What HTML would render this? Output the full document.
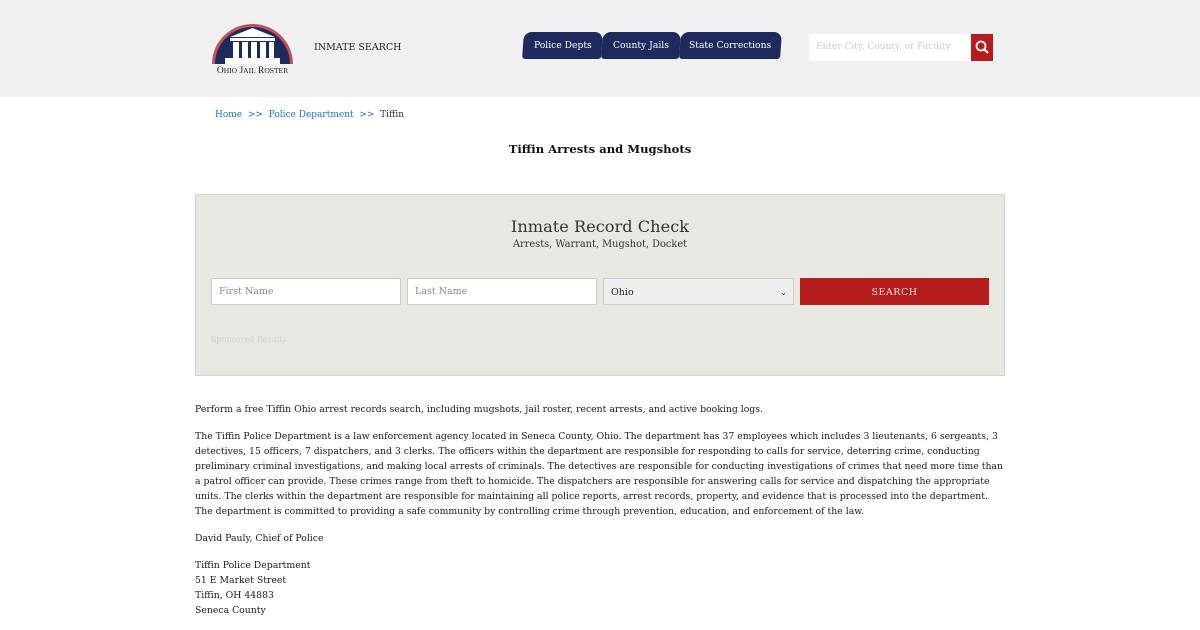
<!DOCTYPE html>
<html><head><meta charset="utf-8"><style>
*{box-sizing:border-box;margin:0;padding:0}
body{width:1200px;height:620px;overflow:hidden;background:#fff;font-family:"DejaVu Serif","Liberation Serif",serif;color:#1a1a1a}
.hdr{height:97px;background:#f0f0f0;position:relative}
.logo{position:absolute;left:206px;top:20px}
.ins{position:absolute;left:314px;top:42px;font-size:9.5px;color:#222}
.tab{position:absolute;top:32px;height:27px;background:#1f2a5c;color:#fff;font-size:9.2px;line-height:28px;text-align:center;border-radius:8px 8px 3px 3px;transform:skewX(-4deg)}
.tab span{display:inline-block;transform:skewX(4deg)}
.srch{position:absolute;left:809px;top:34px;width:162px;height:27px;background:#fff;font-size:9px;color:#ccc;line-height:27px;padding-left:7px;white-space:nowrap;overflow:hidden}
.sbtn{position:absolute;left:971px;top:34px;width:22px;height:27px;background:#b51c1c}
.bc{position:absolute;left:215px;top:110px;font-size:9px;color:#1a73c8}
.bc b{font-weight:normal;color:#333}
h1{position:absolute;left:0;width:1200px;text-align:center;top:142px;font-size:11.6px;font-weight:bold;color:#111}
.box{position:absolute;left:195px;top:194px;width:810px;height:182px;background:#e8e7e2;border:1px solid #d4d3ce}
.box .t{position:absolute;top:22px;width:100%;text-align:center;font-size:16.2px;color:#333}
.box .s{position:absolute;top:44px;width:100%;text-align:center;font-size:9.8px;color:#333}
.in{position:absolute;top:83px;height:27px;background:#fff;border:1px solid #ccc;font-size:9.5px;color:#888;line-height:25px;padding-left:7px}
.go{position:absolute;left:604px;top:83px;width:189px;height:27px;background:#b51c1c;color:#f3dcdc;font-size:9.5px;text-align:center;line-height:29px;letter-spacing:.5px}
.sp{position:absolute;left:15px;top:140px;font-size:8px;color:#d0cfca}
.txt{position:absolute;left:195px;top:402px;width:810px;font-size:9.3px;line-height:15px;color:#1a1a1a}
.txt p{margin-bottom:12px}
</style></head><body>
<div class="hdr">
 <svg class="logo" width="94" height="58" viewBox="0 0 94 58">
  <path d="M6 44 A40.5 40 0 0 1 87 44 Z" fill="#c0505a"/>
  <path d="M9 44 A37.5 37 0 0 1 84 44 Z" fill="#1f2a5c"/>
  <polygon points="24,17 46.5,8 69,17" fill="#fff"/>
  <rect x="24" y="18" width="45" height="3" fill="#fff"/>
  <rect x="27" y="22" width="6" height="16" fill="#fff"/><rect x="36" y="22" width="6" height="16" fill="#fff"/><rect x="45" y="22" width="6" height="16" fill="#fff"/><rect x="54" y="22" width="6" height="16" fill="#fff"/><rect x="63" y="22" width="5" height="16" fill="#fff"/>
  <rect x="19" y="38" width="55" height="6" fill="#fff"/>
  <text x="46.5" y="53" text-anchor="middle" font-size="9.5" fill="#222" font-family="Liberation Serif,serif">O<tspan font-size="7.5">HIO</tspan> J<tspan font-size="7.5">AIL</tspan> R<tspan font-size="7.5">OSTER</tspan></text>
 </svg>
 <div class="ins">INMATE SEARCH</div>
 <div class="tab" style="left:523px;width:79px"><span>Police Depts</span></div>
 <div class="tab" style="left:602px;width:78px"><span>County Jails</span></div>
 <div class="tab" style="left:680px;width:101px"><span>State Corrections</span></div>
 <div class="srch">Enter City, County, or Facility</div>
 <div class="sbtn"><svg width="22" height="27" viewBox="0 0 22 27"><circle cx="10" cy="12" r="4.5" fill="none" stroke="#fff" stroke-width="1.8"/><line x1="13.3" y1="15.3" x2="17" y2="19" stroke="#fff" stroke-width="2.2"/></svg></div>
</div>
<div class="bc">Home &nbsp;&gt;&gt;&nbsp; Police Department &nbsp;&gt;&gt;&nbsp; <b>Tiffin</b></div>
<h1>Tiffin Arrests and Mugshots</h1>
<div class="box">
 <div class="t">Inmate Record Check</div>
 <div class="s">Arrests, Warrant, Mugshot, Docket</div>
 <div class="in" style="left:15px;width:190px">First Name</div>
 <div class="in" style="left:211px;width:190px">Last Name</div>
 <div class="in" style="left:407px;width:191px;background:#efefef;color:#222;line-height:27px">Ohio<span style="position:absolute;right:6px;font-size:8px">&#8964;</span></div>
 <div class="go">SEARCH</div>
 <div class="sp">Sponsored Results</div>
</div>
<div class="txt">
<p>Perform a free Tiffin Ohio arrest records search, including mugshots, jail roster, recent arrests, and active booking logs.</p>
<p>The Tiffin Police Department is a law enforcement agency located in Seneca County, Ohio. The department has 37 employees which includes 3 lieutenants, 6 sergeants, 3 detectives, 15 officers, 7 dispatchers, and 3 clerks. The officers within the department are responsible for responding to calls for service, deterring crime, conducting preliminary criminal investigations, and making local arrests of criminals. The detectives are responsible for conducting investigations of crimes that need more time than a patrol officer can provide. These crimes range from theft to homicide. The dispatchers are responsible for answering calls for service and dispatching the appropriate units. The clerks within the department are responsible for maintaining all police reports, arrest records, property, and evidence that is processed into the department. The department is committed to providing a safe community by controlling crime through prevention, education, and enforcement of the law.</p>
<p>David Pauly, Chief of Police</p>
<p>Tiffin Police Department<br>51 E Market Street<br>Tiffin, OH 44883<br>Seneca County</p>
</div>
</body></html>
